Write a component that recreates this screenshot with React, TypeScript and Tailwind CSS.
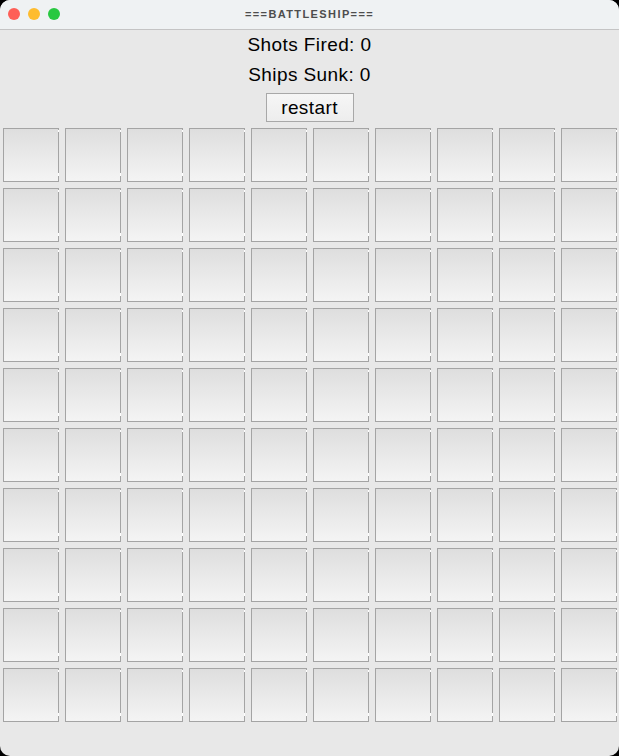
import React from "react";

const ROWS = 10;
const COLS = 10;

function Cell() {
  return (
    <button className="relative w-[56px] h-[54px] border border-[#a4a4a4] bg-gradient-to-b from-[#dedede] to-[#f4f4f4]">
      {/* little white notches Swing leaves on the right edge */}
      <span className="absolute right-[-1px] top-[1px] w-[1px] h-[2px] bg-white" />
      <span className="absolute right-[-1px] bottom-[5px] w-[1px] h-[3px] bg-white" />
    </button>
  );
}

export default function App() {
  return (
    <div className="w-[619px] h-[756px] bg-black" style={{ fontFamily: '"Liberation Sans", Arial, sans-serif' }}>
      <div className="w-full h-full rounded-[10px] overflow-hidden bg-[#e8e8e8] flex flex-col">
        {/* Title bar */}
        <div className="relative h-[30px] shrink-0 bg-[#eff2f3] border-b border-[#c4c4c4] flex items-center justify-center">
          <div className="absolute left-[8px] top-[8px] flex gap-[8px]">
            <span className="w-[12px] h-[12px] rounded-full bg-[#fe5f57]" />
            <span className="w-[12px] h-[12px] rounded-full bg-[#febc2e]" />
            <span className="w-[12px] h-[12px] rounded-full bg-[#28c840]" />
          </div>
          <span className="text-[11px] font-bold text-[#4d4d4d] tracking-[1.4px]">===BATTLESHIP===</span>
        </div>

        {/* Status */}
        <div className="flex flex-col items-center text-black text-[19px] tracking-[0.4px] leading-[30px]">
          <div>Shots Fired: 0</div>
          <div>Ships Sunk: 0</div>
          <button className="mt-[3px] w-[88px] h-[29px] border border-[#a8a8a8] bg-gradient-to-b from-[#f6f6f6] to-[#ededed] text-[19px] tracking-[0.4px] leading-none text-black">
            restart
          </button>
        </div>

        {/* Board */}
        <div className="mt-[6px] pl-[3px] grid grid-cols-[repeat(10,56px)] gap-[6px]">
          {Array.from({ length: ROWS * COLS }).map((_, i) => (
            <Cell key={i} />
          ))}
        </div>
      </div>
    </div>
  );
}
